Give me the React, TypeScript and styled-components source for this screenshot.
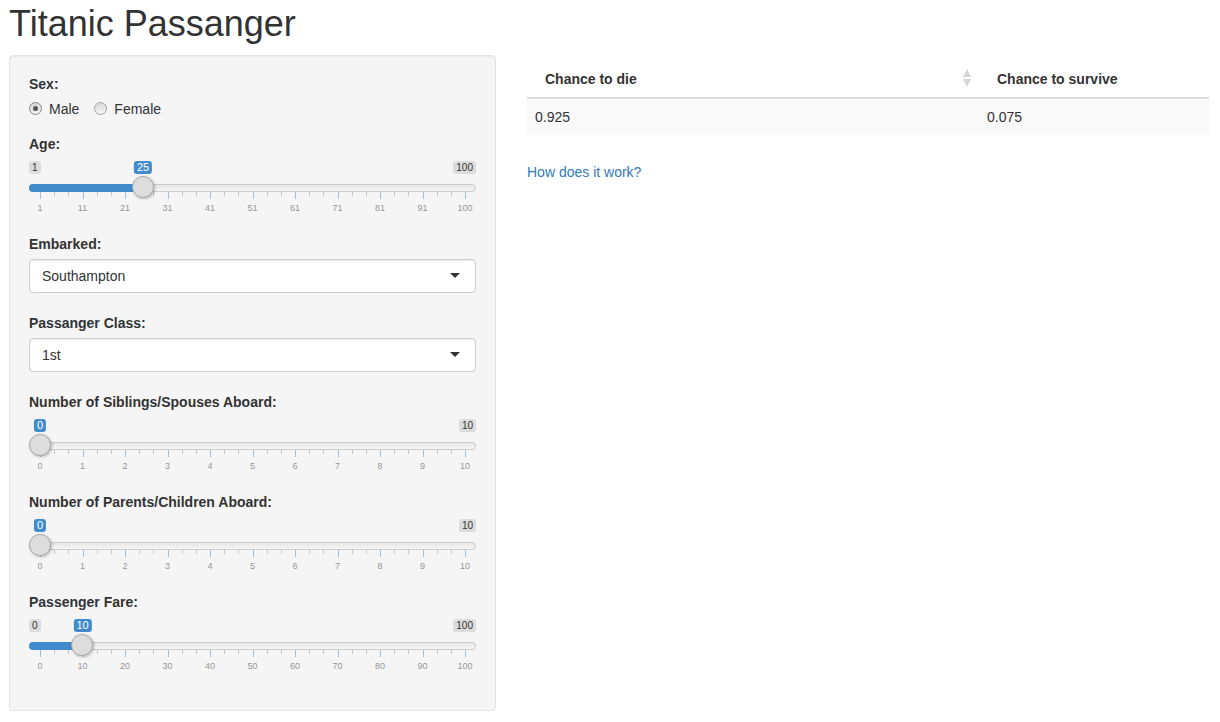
import React from "react";
import styled, { createGlobalStyle } from "styled-components";

const GlobalStyle = createGlobalStyle`
  html, body {
    margin: 0;
    background: #fff;
  }
  body {
    font-family: "Liberation Sans", Arial, Helvetica, sans-serif;
    font-size: 14px;
    line-height: 20px;
    color: #333;
  }
  * {
    box-sizing: border-box;
  }
`;

const Page = styled.div`
  padding: 0 11px 0 9px;
`;

const Title = styled.h2`
  margin: 4px 0 11px;
  font-size: 36px;
  line-height: 1.1;
  font-weight: 500;
  color: #333;
`;

const Row = styled.div`
  display: flex;
  align-items: flex-start;
  gap: 31px;
`;

const Well = styled.div`
  flex: none;
  width: 487px;
  padding: 18px 19px;
  background: #f5f5f5;
  border: 1px solid #e3e3e3;
  border-radius: 4px;
  box-shadow: inset 0 1px 1px rgba(0, 0, 0, 0.05);
`;

const FormGroup = styled.div<{ $gap?: number }>`
  margin-bottom: ${(p) => p.$gap ?? 15}px;
`;

const Label = styled.label`
  display: block;
  margin-bottom: 5px;
  font-weight: bold;
`;

const RadioRow = styled.div`
  display: flex;
  align-items: center;
  gap: 15px;
  height: 20px;
`;

const RadioOption = styled.span`
  display: flex;
  align-items: center;
  gap: 7px;
`;

const RadioDot = styled.span<{ $checked?: boolean }>`
  display: flex;
  align-items: center;
  justify-content: center;
  width: 13px;
  height: 13px;
  border-radius: 50%;
  border: 1px solid ${(p) => (p.$checked ? "#858585" : "#a3a3a3")};
  background: linear-gradient(to bottom, #d8d8d8, #f4f4f4);

  &::after {
    content: "";
    display: ${(p) => (p.$checked ? "block" : "none")};
    width: 5px;
    height: 5px;
    border-radius: 50%;
    background: #555;
  }
`;

const SelectBox = styled.div`
  display: flex;
  align-items: center;
  justify-content: space-between;
  height: 34px;
  padding: 0 15px 0 12px;
  background: #fff;
  border: 1px solid #ccc;
  border-radius: 4px;
  box-shadow: inset 0 1px 1px rgba(0, 0, 0, 0.075);
`;

const Caret = styled.span`
  width: 0;
  height: 0;
  border-style: solid;
  border-width: 5px 5px 0;
  border-color: #333 transparent transparent;
`;

const SliderBox = styled.div`
  display: flex;
  flex-direction: column;
  height: 60px;
  padding-top: 2px;
`;

const BadgeRow = styled.div`
  position: relative;
  display: flex;
  justify-content: space-between;
  height: 13px;
`;

const EdgeBadge = styled.span<{ $hidden?: boolean }>`
  visibility: ${(p) => (p.$hidden ? "hidden" : "visible")};
  padding: 1px 3px;
  font-size: 10px;
  line-height: 11px;
  color: #333;
  background: rgba(0, 0, 0, 0.1);
  border-radius: 3px;
`;

const ValueBadge = styled.span`
  position: absolute;
  top: 0;
  transform: translateX(-50%);
  padding: 1px 3px;
  font-size: 11px;
  line-height: 11px;
  color: #fff;
  background: #428bca;
  border-radius: 3px;
  white-space: nowrap;
`;

const Track = styled.div`
  position: relative;
  z-index: 1;
  margin-top: 10px;
  height: 8px;
  border: 1px solid #ccc;
  border-radius: 16px;
  background: linear-gradient(to bottom, #ddd -50%, #fff 150%);
`;

const Bar = styled.div`
  position: absolute;
  top: -1px;
  left: -1px;
  height: 8px;
  background: #428bca;
  border-radius: 16px 0 0 16px;
`;

const Handle = styled.div`
  position: absolute;
  top: -9px;
  width: 22px;
  height: 22px;
  margin-left: -12px;
  border-radius: 50%;
  background: #ddd;
  border: 1px solid #aaa;
  box-shadow: 1px 1px 3px rgba(0, 0, 0, 0.25);
`;

const Grid = styled.div`
  position: relative;
  flex: 1;
  margin: 0 11px;
`;

const Tick = styled.span<{ $small?: boolean }>`
  position: absolute;
  top: 0;
  width: 1px;
  height: ${(p) => (p.$small ? 4 : 7)}px;
  background: ${(p) => (p.$small ? "#999" : "#428bca")};
  opacity: 0.5;
`;

const TickText = styled.span`
  position: absolute;
  top: 12px;
  transform: translateX(-50%);
  font-size: 9px;
  line-height: 9px;
  color: #959595;
  white-space: nowrap;
`;

const Main = styled.div`
  flex: 1;
  min-width: 0;
`;

const Table = styled.table`
  width: 100%;
  margin-top: 2px;
  border-collapse: collapse;
  table-layout: fixed;
`;

const Col = styled.col<{ $w?: number }>`
  width: ${(p) => (p.$w ? `${p.$w}px` : "auto")};
`;

const Th = styled.th`
  position: relative;
  padding: 12px 18px 8px;
  text-align: left;
  font-weight: bold;
  border-bottom: 2px solid #ddd;
`;

const Td = styled.td`
  padding: 8px;
  background: #f9f9f9;
`;

const SortIcon = styled.svg`
  position: absolute;
  right: 8px;
  top: 50%;
  margin-top: -8px;
`;

const HelpLink = styled.a`
  display: inline-block;
  margin-top: 27px;
  color: #337ab7;
  text-decoration: none;
`;

interface SliderProps {
  min: number;
  max: number;
  value: number;
  labels: number[];
}

const TRACK = 426;

const Slider: React.FC<SliderProps> = ({ min, max, value, labels }) => {
  const frac = (value - min) / (max - min);
  const pos = `calc(11px + ${frac} * (100% - 22px))`;
  const minW = String(min).length * 5.6 + 6;
  const valW = String(value).length * 6.1 + 6;
  const hideMin = 11 + frac * TRACK - valW / 2 < minW + 2;
  const n = labels.length - 1;
  const ticks = labels.flatMap((l, i) => {
    const p = (i / n) * 100;
    const w = 100 / n / 3;
    const out: React.ReactNode[] = [];
    if (i > 0) {
      out.push(<Tick key={`s${i}a`} $small style={{ left: `${p - w}%` }} />);
      out.push(<Tick key={`s${i}b`} $small style={{ left: `${p - 2 * w}%` }} />);
    }
    out.push(<Tick key={`b${i}`} style={{ left: `${p}%` }} />);
    out.push(
      <TickText key={`t${i}`} style={{ left: `${p}%` }}>
        {l}
      </TickText>
    );
    return out;
  });
  return (
    <SliderBox>
      <BadgeRow>
        <EdgeBadge $hidden={hideMin}>{min}</EdgeBadge>
        <EdgeBadge>{max}</EdgeBadge>
        <ValueBadge style={{ left: pos }}>{value}</ValueBadge>
      </BadgeRow>
      <Track>
        {frac > 0 && <Bar style={{ width: pos }} />}
        <Handle style={{ left: pos }} />
      </Track>
      <Grid>{ticks}</Grid>
    </SliderBox>
  );
};

const range = (from: number, step: number, count: number) =>
  Array.from({ length: count }, (_, i) => from + i * step);

const ageLabels = [1, 11, 21, 31, 41, 51, 61, 71, 81, 91, 100];

export default function App() {
  return (
    <Page>
      <GlobalStyle />
      <Title>Titanic Passanger</Title>
      <Row>
        <Well>
          <FormGroup>
            <Label>Sex:</Label>
            <RadioRow>
              <RadioOption>
                <RadioDot $checked />
                Male
              </RadioOption>
              <RadioOption>
                <RadioDot />
                Female
              </RadioOption>
            </RadioRow>
          </FormGroup>
          <FormGroup>
            <Label>Age:</Label>
            <Slider min={1} max={100} value={25} labels={ageLabels} />
          </FormGroup>
          <FormGroup $gap={20}>
            <Label>Embarked:</Label>
            <SelectBox>
              Southampton
              <Caret />
            </SelectBox>
          </FormGroup>
          <FormGroup $gap={20}>
            <Label>Passanger Class:</Label>
            <SelectBox>
              1st
              <Caret />
            </SelectBox>
          </FormGroup>
          <FormGroup>
            <Label>Number of Siblings/Spouses Aboard:</Label>
            <Slider min={0} max={10} value={0} labels={range(0, 1, 11)} />
          </FormGroup>
          <FormGroup>
            <Label>Number of Parents/Children Aboard:</Label>
            <Slider min={0} max={10} value={0} labels={range(0, 1, 11)} />
          </FormGroup>
          <FormGroup>
            <Label>Passenger Fare:</Label>
            <Slider min={0} max={100} value={10} labels={range(0, 10, 11)} />
          </FormGroup>
        </Well>
        <Main>
          <Table>
            <colgroup>
              <Col $w={452} />
              <Col />
            </colgroup>
            <thead>
              <tr>
                <Th>
                  Chance to die
                  <SortIcon width="8" height="18" viewBox="0 0 8 18">
                    <polygon points="4,0 8,8 0,8" fill="#d6d6d6" />
                    <polygon points="0,10 8,10 4,18" fill="#d6d6d6" />
                  </SortIcon>
                </Th>
                <Th>Chance to survive</Th>
              </tr>
            </thead>
            <tbody>
              <tr>
                <Td>0.925</Td>
                <Td>0.075</Td>
              </tr>
            </tbody>
          </Table>
          <HelpLink href="#">How does it work?</HelpLink>
        </Main>
      </Row>
    </Page>
  );
}
